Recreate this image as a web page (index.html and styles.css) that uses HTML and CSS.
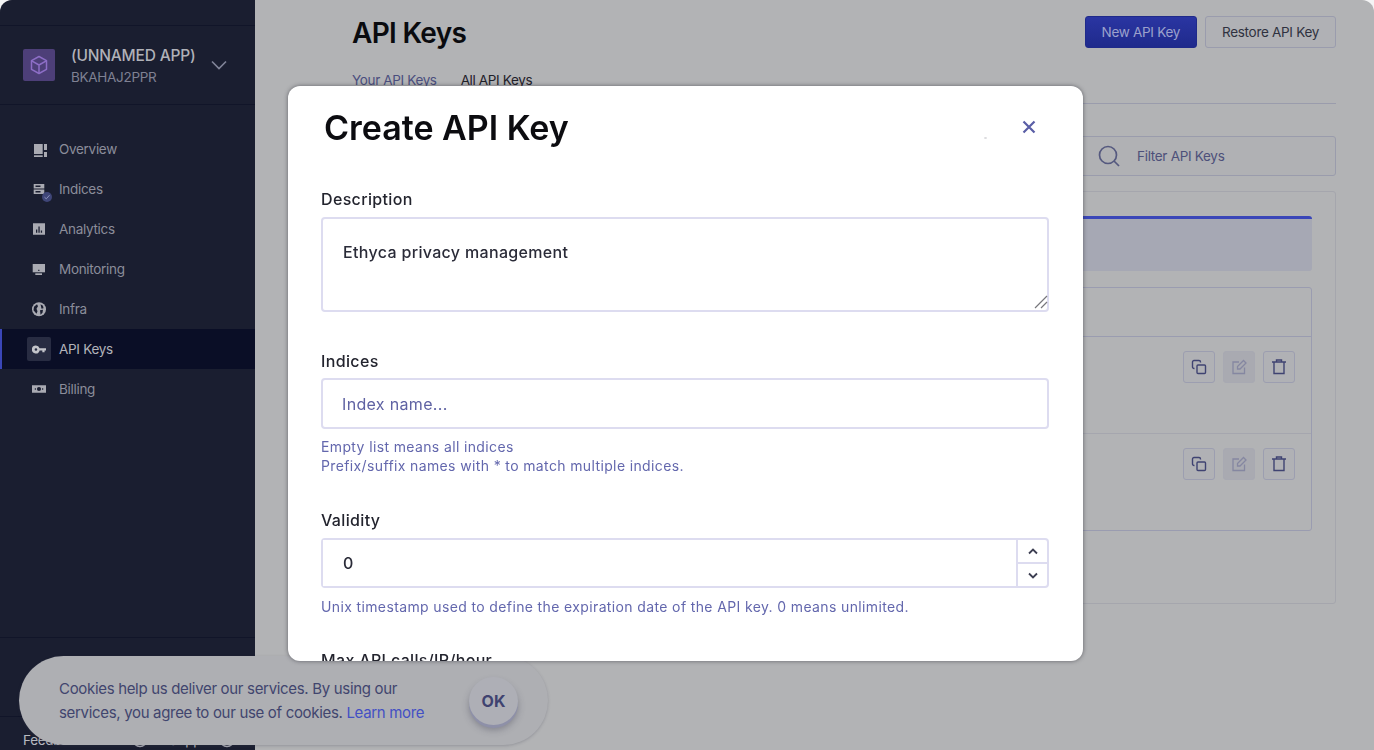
FILE: index.html
```html
<!DOCTYPE html>
<html lang="en">
<head>
<meta charset="utf-8">
<title>API Keys</title>
<link rel="stylesheet" href="styles.css">
</head>
<body>
<div class="app">
  <aside class="sidebar">
    <div class="side-top"></div>
    <div class="app-switch">
      <div class="app-logo">
        <svg width="20" height="20" viewBox="0 0 20 20" fill="none" stroke="#8d6ec6" stroke-width="1.5" stroke-linejoin="round"><path d="M10 1.5l7.5 4.2v8.6L10 18.5l-7.5-4.2V5.7z"/><path d="M2.7 5.8L10 10l7.3-4.2M10 10v8.4"/></svg>
      </div>
      <div class="app-text">
        <div class="app-name">(UNNAMED APP)</div>
        <div class="app-id">BKAHAJ2PPR</div>
      </div>
      <svg class="app-chev" width="16" height="10" viewBox="0 0 16 10" fill="none" stroke="#7f8296" stroke-width="1.7"><path d="M1 1.5l7 7 7-7"/></svg>
    </div>
    <nav class="nav">
      <a class="nav-item"><span class="nav-icon"><svg width="16" height="16" viewBox="0 0 16 16" fill="#a9aab2"><rect x="3" y="3" width="8.7" height="10"/><rect x="3" y="14.3" width="8.700" height="1.700"/><rect x="13" y="3" width="3" height="6"/><rect x="13" y="11" width="3" height="5"/></svg></span><span class="nav-label">Overview</span></a>
      <a class="nav-item"><span class="nav-icon"><svg width="16" height="16" viewBox="0 0 16 16" fill="#a9aab2"><path fill-rule="evenodd" d="M2.700 3h10.600v4.500H2.700zm1.800 1.500v1.400h5V4.500zM2.700 8.500h10.600V13H2.700zm1.800 1.500v1.400h5V10z"/></svg><span class="badge"><svg width="8" height="8" viewBox="0 0 8 8" fill="none" stroke="#8d93bd" stroke-width="1"><path d="M1.500 4.200l1.800 1.600 3.200-3.600"/></svg></span></span><span class="nav-label">Indices</span></a>
      <a class="nav-item"><span class="nav-icon"><svg width="16" height="16" viewBox="0 0 16 16"><path fill="#a9aab2" d="M2 2.300h12v11.400H2z"/><path fill="#1a1e30" d="M5 8.500h1.300v3.300H5zM7.400 5.500h1.300v6.300H7.400zM9.800 9.500h1.300v2.300H9.800z"/></svg></span><span class="nav-label">Analytics</span></a>
      <a class="nav-item"><span class="nav-icon"><svg width="16" height="16" viewBox="0 0 16 16" fill="#a9aab2"><path d="M1.700 3H14v8.300H1.700z"/><rect x="7" y="8.800" width="1.500" height="1" fill="#1a1e30"/><rect x="4.300" y="12.300" width="6.700" height="1.700"/></svg></span><span class="nav-label">Monitoring</span></a>
      <a class="nav-item"><span class="nav-icon"><svg width="16" height="16" viewBox="0 0 16 16"><circle cx="8" cy="8.300" r="7" fill="#a9aab2"/><path fill="#1a1e30" d="M3 5.800l3-2.500 1 2-1.500 2.500 1 2.500-1 2.500L2.500 9.300zM9.500 3.300L12 4.800l.5 2.500-2 .5zM9 9.300l3-.5-.5 3-2 2z"/></svg></span><span class="nav-label">Infra</span></a>
      <a class="nav-item nav-item-active"><span class="nav-icon nav-icon-active"><svg width="14" height="9" viewBox="0 0 16 10"><path fill="#c3c4ca" fill-rule="evenodd" d="M4.500 0.500a4.500 4.500 0 0 1 4.200 3H16v2.500h-1.600v2h-2.600V6H8.700a4.500 4.500 0 1 1-4.200-5.500zm0 3a1.500 1.500 0 1 0 0 3 1.500 1.500 0 0 0 0-3z"/></svg></span><span class="nav-label">API Keys</span></a>
      <a class="nav-item"><span class="nav-icon"><svg width="14" height="8" viewBox="0 1 15 8"><path fill="#a9aab2" fill-rule="evenodd" d="M0 1h15v8H0zm7.500 1.800a2.200 2.200 0 1 0 0 4.400 2.200 2.200 0 0 0 0-4.400zM3 4.300v1.500h1.200V4.300zm7.800 0v1.500H12V4.300z"/></svg></span><span class="nav-label">Billing</span></a>
    </nav>
    <div class="side-mid"></div>
    <div class="side-foot">
      <span class="foot-link">Feedback</span>
      <svg class="foot-icon" width="16" height="16" viewBox="0 0 16 16" fill="none" stroke="#a9aab2" stroke-width="1.500"><circle cx="8" cy="8" r="6.500"/></svg>
      <span class="foot-link">Support</span>
      <svg class="foot-icon-end" width="16" height="16" viewBox="0 0 16 16" fill="none" stroke="#a9aab2" stroke-width="1.500"><circle cx="8" cy="8" r="6.500"/></svg>
    </div>
  </aside>

  <main class="main">
    <header class="page-head">
      <h1 class="page-title">API Keys</h1>
      <div class="head-actions">
        <button class="btn btn-primary">New API Key</button>
        <button class="btn btn-plain">Restore API Key</button>
      </div>
    </header>
    <div class="tabs">
      <span class="tab">Your API Keys</span>
      <span class="tab tab-active">All API Keys</span>
    </div>
    <div class="filter">
      <svg width="22" height="22" viewBox="0 0 22 22" fill="none" stroke="#55597f" stroke-width="1.700"><circle cx="10" cy="10" r="8.500"/><path d="M16 16l5 5"/></svg>
      <span class="filter-text">Filter API Keys</span>
    </div>
    <section class="card">
      <div class="banner"></div>
      <div class="table">
        <div class="table-head"></div>
        <div class="table-row">
          <button class="icon-btn"><svg width="16" height="16" viewBox="0 0 16 16" fill="none" stroke="#3f4372" stroke-width="1.400"><rect x="6" y="6" width="8.500" height="8.500" rx="1"/><path d="M3.500 9.500H3a1.500 1.500 0 0 1-1.500-1.500V3A1.500 1.500 0 0 1 3 1.500h5A1.500 1.500 0 0 1 9.500 3v.5"/></svg></button>
          <button class="icon-btn icon-btn-off"><svg width="16" height="16" viewBox="0 0 16 16" fill="none" stroke="#8587a1" stroke-width="1.300"><path d="M8 3H2v11.500h11.500V8.500"/><path d="M6.500 10V7.500L12.500 1.500 15 4l-6 6z"/></svg></button>
          <button class="icon-btn"><svg width="16" height="16" viewBox="0 0 16 16" fill="none" stroke="#3f4372" stroke-width="1.400"><path d="M1 3h14M3 3v11.500h10V3M5.500 3V1h5v2"/></svg></button>
        </div>
        <div class="table-row table-row-last">
          <button class="icon-btn"><svg width="16" height="16" viewBox="0 0 16 16" fill="none" stroke="#3f4372" stroke-width="1.400"><rect x="6" y="6" width="8.500" height="8.500" rx="1"/><path d="M3.500 9.500H3a1.500 1.500 0 0 1-1.500-1.500V3A1.500 1.500 0 0 1 3 1.500h5A1.500 1.500 0 0 1 9.500 3v.5"/></svg></button>
          <button class="icon-btn icon-btn-off"><svg width="16" height="16" viewBox="0 0 16 16" fill="none" stroke="#8587a1" stroke-width="1.300"><path d="M8 3H2v11.500h11.500V8.500"/><path d="M6.500 10V7.500L12.500 1.500 15 4l-6 6z"/></svg></button>
          <button class="icon-btn"><svg width="16" height="16" viewBox="0 0 16 16" fill="none" stroke="#3f4372" stroke-width="1.400"><path d="M1 3h14M3 3v11.500h10V3M5.500 3V1h5v2"/></svg></button>
        </div>
      </div>
    </section>
  </main>

  <div class="cookie">
    <p class="cookie-text">Cookies help us deliver our services. By using our services, you agree to our use of cookies. <a class="cookie-link">Learn more</a></p>
    <button class="cookie-ok">OK</button>
  </div>

  <div class="modal">
    <span class="modal-dot"></span>
    <div class="modal-head">
      <h2 class="modal-title">Create API Key</h2>
      <svg class="modal-close" width="14" height="14" viewBox="0 0 14 14" fill="none" stroke="#5a5ea6" stroke-width="2.200"><path d="M1.500 1.500l11 11M12.500 1.500l-11 11"/></svg>
    </div>
    <div class="field field-first">
      <label class="field-label">Description</label>
      <div class="area-wrap">
        <textarea class="control control-area">Ethyca privacy management</textarea>
        <svg class="area-grip" width="14" height="14" viewBox="0 0 14 14" fill="none" stroke="#77777c" stroke-width="1.200"><path d="M1 13L13 1M7 13l6-6"/></svg>
      </div>
    </div>
    <div class="field field-indices">
      <label class="field-label">Indices</label>
      <input class="control control-input" placeholder="Index name...">
      <p class="hint">Empty list means all indices<br>Prefix/suffix names with * to match multiple indices.</p>
    </div>
    <div class="field field-validity">
      <label class="field-label">Validity</label>
      <div class="number">
        <input class="number-input" value="0">
        <div class="spin">
          <span class="spin-cell"><svg width="10" height="7" viewBox="0 0 10 7" fill="none" stroke="#3d3f52" stroke-width="1.800"><path d="M1 5.500l4-4 4 4"/></svg></span>
          <span class="spin-cell spin-cell-low"><svg width="10" height="7" viewBox="0 0 10 7" fill="none" stroke="#3d3f52" stroke-width="1.800"><path d="M1 1.500l4 4 4-4"/></svg></span>
        </div>
      </div>
      <p class="hint hint-validity">Unix timestamp used to define the expiration date of the API key. 0 means unlimited.</p>
    </div>
    <div class="field field-max">
      <label class="field-label">Max API calls/IP/hour</label>
    </div>
  </div>
</div>
</body>
</html>
```

FILE: styles.css
```css
* { box-sizing: border-box; }
html, body { margin: 0; height: 100%; background: #f4f4f5; overflow: hidden; }
body { font-family: Inter, "Liberation Sans", sans-serif; }
button, input, textarea { font-family: inherit; }

.app { position: relative; display: flex; width: 1374px; height: 750px; border-radius: 12px 12px 0 0; overflow: hidden; background: #b2b3b5; }

.sidebar { display: flex; flex-direction: column; flex: 0 0 255px; background: #1a1e30; }
.side-top { height: 26px; border-bottom: 1px solid #111529; }
.app-switch { display: flex; align-items: center; height: 79px; padding: 0 28px 0 23px; border-bottom: 1px solid #111529; }
.app-logo { display: flex; align-items: center; justify-content: center; width: 32px; height: 32px; border-radius: 2px; background: #4d3f78; }
.app-text { flex: 1; margin-left: 16px; padding-top: 2px; }
.app-name { font-size: 15.5px; line-height: 20px; font-weight: 500; letter-spacing: -.2px; color: #b0b1b8; }
.app-id { margin-top: 1px; font-size: 13.5px; line-height: 20px; letter-spacing: -.3px; color: #7f8193; }
.nav { flex: 1; padding-top: 24px; }
.nav-item { display: flex; align-items: center; height: 40px; padding-left: 27px; font-size: 13.5px; letter-spacing: -.3px; color: #8b8d9a; }
.nav-label { margin-top: -1px; }
.nav-item-active { background: #0a0e26; color: #b2b3ba; box-shadow: inset 2px 0 0 #3a46b8; }
.nav-icon { position: relative; display: flex; align-items: center; justify-content: center; width: 24px; height: 24px; margin-right: 8px; border-radius: 2px; }
.nav-icon-active { background: #282c42; }
.badge { position: absolute; left: 15px; top: 15px; display: flex; align-items: center; justify-content: center; width: 10px; height: 10px; border-radius: 50%; background: #3f4678; }
.side-mid { height: 80px; border-top: 1px solid #111529; border-bottom: 1px solid #111529; flex: none; }
.side-foot { display: flex; align-items: center; height: 33px; padding: 13px 0 0 23px; font-size: 13.5px; letter-spacing: -.3px; color: #b8b9c0; }
.foot-link { white-space: nowrap; }
.foot-icon { margin-left: 49px; margin-right: 21px; }
.foot-icon-end { margin-left: 1px; }

.main { flex: 1; min-width: 0; padding: 16px 38px 0 97px; }
.page-head { display: flex; align-items: center; justify-content: space-between; height: 32px; }
.page-title { margin: 1px 0 0; font-size: 28px; line-height: 32px; font-weight: 600; letter-spacing: -.7px; color: #0a0b0f; }
.head-actions { display: flex; gap: 8px; }
.btn { height: 32px; padding: 0 16px; border-radius: 3px; font-size: 13.5px; letter-spacing: -.3px; }
.btn-primary { border: 1px solid #1f2a8a; background: linear-gradient(#2a35a2, #1f2a8c); color: #9ca1cc; }
.btn-plain { border: 1px solid #9a9cad; background: #b0b1b5; color: #2f3140; }
.tabs { display: flex; gap: 24px; height: 56px; padding-top: 23px; border-bottom: 1px solid #9a9cac; font-size: 13.5px; line-height: 18px; letter-spacing: -.36px; color: #4a4e7e; }
.tab-active { color: #1f2029; }
.filter { display: flex; align-items: center; height: 40px; margin-top: 32px; padding-left: 745px; border: 1px solid #9a9cac; border-radius: 3px; background: #b0b1b4; }
.filter-text { margin-left: 17px; font-size: 13.5px; letter-spacing: -.3px; color: #4d507a; }
.card { height: 413px; margin-top: 15px; padding: 24px 23px 24px 24px; border: 1px solid #a5a6ad; border-radius: 3px; }
.banner { height: 55px; border-top: 3px solid #3a46b8; border-radius: 3px; background: #a6a8b4; }
.table { height: 244px; margin-top: 16px; border: 1px solid #9a9cb0; border-radius: 3px; }
.table-head { height: 49px; border-bottom: 1px solid #9a9cb0; }
.table-row { display: flex; justify-content: flex-end; gap: 8px; height: 97px; padding: 14px 16px 0 0; border-bottom: 1px solid #a5a6ae; }
.table-row-last { border-bottom: none; }
.icon-btn { display: flex; align-items: center; justify-content: center; width: 32px; height: 32px; padding: 0; border: 1px solid #9c9eb0; border-radius: 3px; background: #b0b1b5; }
.icon-btn-off { border-color: #a8a9b2; background: #a9aab1; }

.modal { position: absolute; left: 288px; top: 86px; width: 795px; height: 575px; padding: 0 34px 0 33px; overflow: hidden; border-radius: 12px; background: #fff; box-shadow: 0 0 4px rgba(30, 30, 40, .55); }
.modal-dot { position: absolute; left: 696px; top: 51px; width: 3px; height: 2px; border-radius: 50%; background: #dcdcdf; }
.modal-head { display: flex; align-items: center; justify-content: space-between; height: 84px; padding: 0 13px 2px 3px; filter: blur(.3px); }
.modal-title { margin: 2px 0 0; font-size: 34px; line-height: 80px; font-weight: 600; color: #0c0c10; }
.field { filter: blur(.3px); }
.field-first { margin-top: 17px; }
.field-label { display: block; height: 24px; font-size: 16px; line-height: 24px; font-weight: 500; letter-spacing: .35px; color: #23242e; }
.area-wrap { position: relative; width: 728px; margin-top: 6px; }
.area-grip { position: absolute; right: 1px; bottom: 3px; }
.control { display: block; width: 728px; border: 2px solid #dddcf0; border-radius: 4px; outline: none; background: #fff; font-size: 16px; font-weight: 500; letter-spacing: .33px; color: #2a2b38; }
.control-area { height: 95px; padding: 21px 20px; line-height: 24px; resize: none; }
.control-input { height: 51px; margin-top: 5px; padding: 0 19px; }
.control-input::placeholder { color: #5f62a3; opacity: 1; font-weight: 400; }
.hint { margin: 8px 0 0; font-size: 14px; line-height: 19px; letter-spacing: .37px; color: #6367ad; }
.hint-validity { margin-top: 9px; }
.field-indices { margin-top: 37px; }
.field-validity { margin-top: 33px; }
.number { display: flex; width: 728px; height: 50px; margin-top: 6px; border: 2px solid #dddcf0; border-radius: 4px; }
.number-input { flex: 1; min-width: 0; padding: 0 20px; border: none; outline: none; font-size: 16px; font-weight: 500; color: #2a2b38; }
.spin { display: flex; flex-direction: column; flex: 0 0 31px; border-left: 2px solid #dddcf0; }
.spin-cell { display: flex; flex: 1; align-items: center; justify-content: center; }
.spin-cell-low { border-top: 2px solid #dddcf0; }
.field-max { margin-top: 32px; }

.cookie { position: absolute; left: 19px; top: 656px; display: flex; align-items: center; gap: 30px; width: 529px; height: 89px; padding: 0 30px 0 40px; border-radius: 45px; background: #aeafb3; box-shadow: 0 1px 3px rgba(60, 60, 80, .25); }
.cookie-text { flex: 1; margin: 0; font-size: 15px; line-height: 24px; letter-spacing: -.32px; color: #41456e; }
.cookie-link { color: #4350c4; }
.cookie-ok { flex: 0 0 49px; width: 49px; height: 48px; margin-top: 1px; padding: 0; border: none; border-radius: 50%; background: #aeafb6; box-shadow: 0 3px 0 #8e90a8, 0 5px 7px rgba(50, 50, 70, .35); font-size: 16px; font-weight: 700; color: #3f4370; }
```
